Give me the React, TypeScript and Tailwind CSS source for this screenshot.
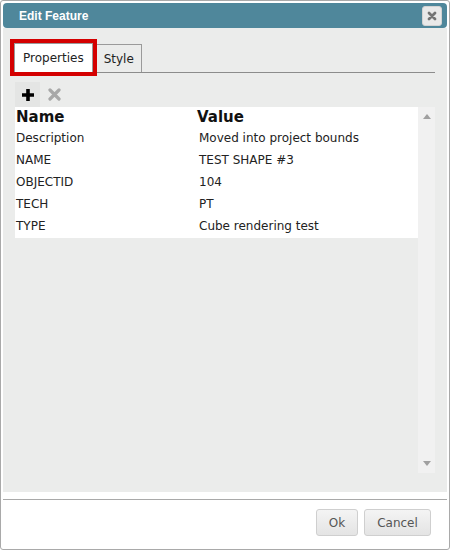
import { useState } from 'react';

const rows = [
  ['Description', 'Moved into project bounds'],
  ['NAME', 'TEST SHAPE #3'],
  ['OBJECTID', '104'],
  ['TECH', 'PT'],
  ['TYPE', 'Cube rendering test'],
];

export default function App() {
  const [tab, setTab] = useState('properties');

  return (
    <div
      className="w-[450px] h-[550px] bg-white border border-[#a9a9a9] rounded-[3px] px-[2px] pt-[2px] flex flex-col"
      style={{ fontFamily: '"DejaVu Sans", Verdana, sans-serif' }}
    >
      {/* title bar */}
      <div className="h-[25px] shrink-0 bg-[#4f879b] rounded-[4px] flex items-center justify-between pl-[16px] pr-[5px]">
        <span className="text-white text-[12px] font-bold" style={{ fontFamily: '"Liberation Sans", Arial, sans-serif' }}>
          Edit Feature
        </span>
        <button className="w-[20px] h-[20px] bg-[#e9e9e9] border border-[#d3d3d3] rounded-[3px] flex items-center justify-center">
          <svg width="10" height="10" viewBox="0 0 10 10">
            <path d="M2 2 L8 8 M8 2 L2 8" stroke="#747474" strokeWidth="2.8" strokeLinecap="round" />
          </svg>
        </button>
      </div>

      {/* body */}
      <div className="flex-1 bg-[#ebeceb] flex flex-col pl-[7px] pr-[9px] pt-[12px]">
        <div className="flex items-end border-b border-[#8c8c8c] h-[33px] mr-[3px] ml-[1px]">
          <div className="border-[4px] border-[#d40000] -mb-[4px] -ml-[1px] relative z-10">
            <button
              onClick={() => setTab('properties')}
              className="h-[29px] px-[8px] bg-white border border-[#9a9a9a] border-b-0 text-[12px] text-[#222]"
            >
              Properties
            </button>
          </div>
          <button
            onClick={() => setTab('style')}
            className={`h-[28px] px-[7px] -ml-[1px] border border-[#9a9a9a] border-b-0 text-[12px] text-[#222] ${tab === 'style' ? 'bg-white' : 'bg-[#ebeceb]'}`}
          >
            Style
          </button>
        </div>

        {/* toolbar */}
        <div className="flex items-end h-[34px] pl-[5px] gap-[7px]">
          <div className="w-[25px] h-[25px] bg-[#e4e5e4] flex items-center justify-center">
            <svg width="14" height="14" viewBox="0 0 14 14">
              <path d="M7 1 V13 M1 7 H13" stroke="#000" strokeWidth="3.6" />
            </svg>
          </div>
          <div className="w-[14px] h-[25px] flex items-center justify-center">
            <svg width="13" height="13" viewBox="0 0 13 13">
              <path d="M2 2 L11 11 M11 2 L2 11" stroke="#a8a8a8" strokeWidth="3.2" strokeLinecap="round" />
            </svg>
          </div>
        </div>

        {/* grid */}
        <div className="flex pl-[5px] pr-[3px]">
          <div className="flex-1 self-start bg-white">
            <div className="flex h-[20px] items-center text-[15px] font-bold text-[#111]">
              <span className="w-[182px] pl-[1px]">Name</span>
              <span>Value</span>
            </div>
            {rows.map(([k, v]) => (
              <div key={k} className="flex h-[22px] items-center text-[12px] text-[#222]">
                <span className="w-[182px] pl-[1px]">{k}</span>
                <span className="pl-[2px]">{v}</span>
              </div>
            ))}
            <div className="h-[1px]" />
          </div>
          <div className="w-[17px] bg-[#f1f1f1] flex flex-col justify-between items-center py-[7px] h-[366px]">
            <svg width="8" height="5" viewBox="0 0 8 5">
              <path d="M0 5 L4 0 L8 5 Z" fill="#a0a0a0" />
            </svg>
            <svg width="8" height="5" viewBox="0 0 8 5">
              <path d="M0 0 L4 5 L8 0 Z" fill="#a0a0a0" />
            </svg>
          </div>
        </div>
      </div>

      {/* footer */}
      <div className="shrink-0 border-t border-[#a9a9a9] mt-[7px] h-[50px] flex items-start justify-end gap-[6px] pt-[9px] pr-[16px]">
        <button className="h-[27px] w-[42px] rounded-[3px] border border-[#cfcfcf] bg-gradient-to-b from-[#f4f4f4] to-[#e4e4e4] text-[12px] text-[#555]">
          Ok
        </button>
        <button className="h-[27px] w-[67px] rounded-[3px] border border-[#cfcfcf] bg-gradient-to-b from-[#f4f4f4] to-[#e4e4e4] text-[12px] text-[#555]">
          Cancel
        </button>
      </div>
    </div>
  );
}
